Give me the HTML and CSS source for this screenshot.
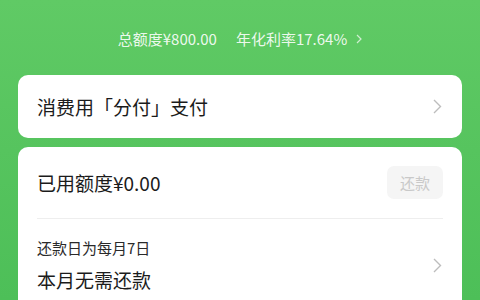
FILE: index.html
```html
<!DOCTYPE html>
<html lang="zh-CN">
<head>
<meta charset="utf-8">
<link rel="stylesheet" href="styles.css">
</head>
<body>
<div class="page">
  <div class="summary">
    <span class="quota">总额度¥800.00</span>
    <span class="rate">年化利率17.64%</span>
    <svg class="mini-chev" width="6" height="10" viewBox="0 0 6 10"><path d="M1 1l4 4-4 4" fill="none" stroke="currentColor" stroke-width="1.2"/></svg>
  </div>
  <div class="card pay">
    <span class="pay-text">消费用「分付」支付</span>
    <svg class="chev" width="9" height="15" viewBox="0 0 9 15"><path d="M1 1l6.5 6.5L1 14" fill="none" stroke="#bdbdbd" stroke-width="1.4"/></svg>
  </div>
  <div class="card detail">
    <div class="used-row">
      <span class="used">已用额度¥0.00</span>
      <button class="repay" disabled>还款</button>
    </div>
    <div class="due-row">
      <div class="due-text">
        <div class="due-day">还款日为每月7日</div>
        <div class="due-status">本月无需还款</div>
      </div>
      <svg class="chev" width="9" height="15" viewBox="0 0 9 15"><path d="M1 1l6.5 6.5L1 14" fill="none" stroke="#bdbdbd" stroke-width="1.4"/></svg>
    </div>
  </div>
</div>
</body>
</html>
```
FILE: styles.css
```css
* { box-sizing: border-box; }
html, body { margin: 0; padding: 0; }
body {
  width: 480px;
  height: 300px;
  overflow: hidden;
  background: linear-gradient(180deg, #60ca65 0%, #56c45e 50%, #4dbf58 100%);
  font-family: "Noto Sans CJK SC", "Noto Sans", sans-serif;
  color: #1b1b1b;
}
.page {
  display: flex;
  flex-direction: column;
  padding: 0 18px;
}
.summary {
  height: 75px;
  display: flex;
  align-items: center;
  justify-content: center;
  padding-top: 2px;
  color: rgba(255,255,255,0.9);
  font-size: 15px;
  line-height: 20px;
}
.quota { margin-right: 19px; }
.mini-chev { margin-left: 9px; color: rgba(255,255,255,0.7); }
.card {
  background: #fff;
  border-radius: 10px;
}
.pay {
  height: 63px;
  display: flex;
  align-items: center;
  justify-content: space-between;
  padding: 0 19px;
  margin-bottom: 9px;
}
.pay-text { font-size: 19px; line-height: 26px; }
.chev { display: block; margin-right: 1px; }
.detail {
  padding: 0 19px;
  height: 200px;
}
.used-row {
  display: flex;
  align-items: center;
  justify-content: space-between;
  padding: 19px 0 19px;
  border-bottom: 1px solid #eeeeee;
}
.used { font-size: 19px; line-height: 33px; }
.repay {
  width: 56px;
  height: 33px;
  border: none;
  border-radius: 7px;
  background: #f5f5f5;
  color: #c9c9c9;
  font-family: inherit;
  font-size: 15px;
  padding: 0;
}
.due-row {
  display: flex;
  align-items: center;
  justify-content: space-between;
  padding-top: 18px;
}
.due-day { font-size: 15px; line-height: 21px; color: #2a2a2a; }
.due-status { font-size: 19px; line-height: 26px; margin-top: 9px; }
```
